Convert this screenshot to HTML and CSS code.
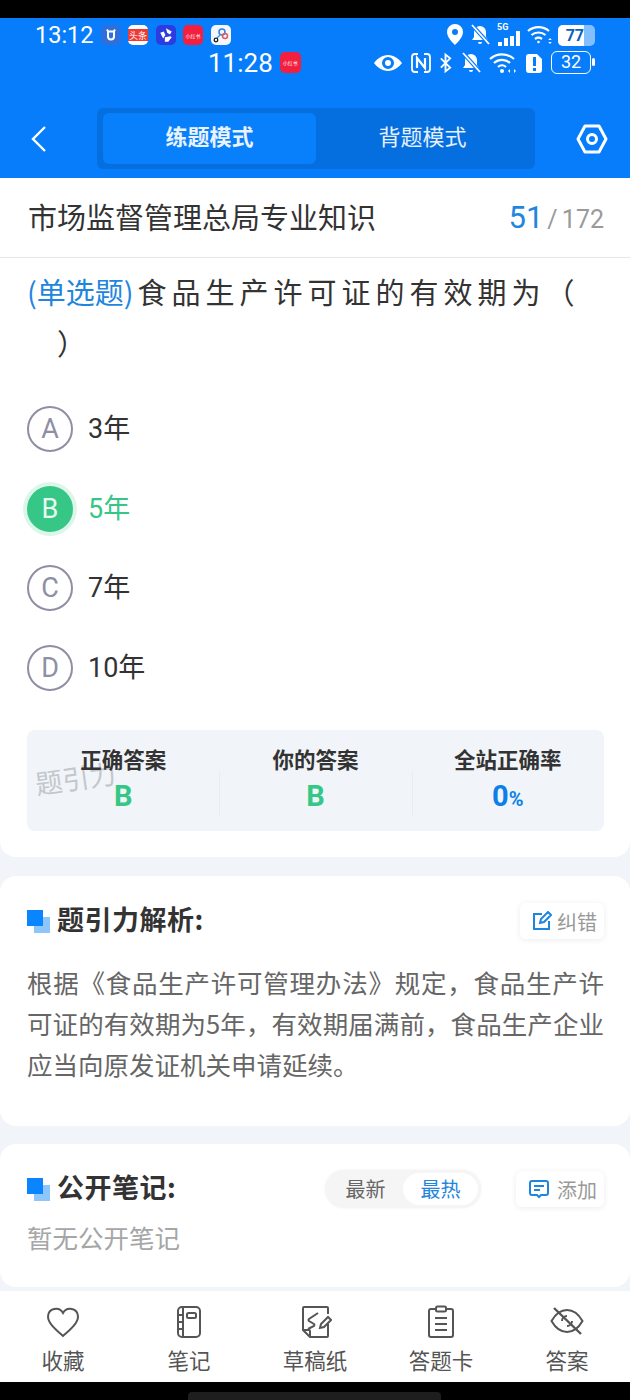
FILE: index.html
```html
<!DOCTYPE html>
<html lang="zh">
<head>
  <meta charset="UTF-8">
  <meta name="viewport" content="width=device-width, initial-scale=1.0">
  <title>题引力</title>
  <link rel="stylesheet" href="styles.css">
</head>
<body>
  <div class="screen">
    <div class="top-black"></div>
    <header class="head">
      <div class="status status-one">
        <span class="clock">13:12</span>
        <div class="apps">
          <span class="app app-u"><svg width="14" height="14" viewBox="0 0 14 14"><path d="M3 1.500l1.200 2M11 1.500l-1.200 2M3 3.500h8M4 3.500v5a3 3 0 0 0 6 0v-5" fill="none" stroke="#fff" stroke-width="2"/></svg></span>
          <span class="app app-news">头条</span>
          <span class="app app-star"><svg width="16" height="16" viewBox="0 0 14 14"><path d="M7 1l5 3-1.500 2.500L8 5zM2 5l3-1 1.500 3-2 3zM6 9l5-1 1 1-3 4H6z" fill="#fff"/></svg></span>
          <span class="app app-red">小红书</span>
          <span class="app app-link"><svg width="18" height="18" viewBox="0 0 18 18" fill="none"><circle cx="10" cy="6" r="3" stroke="#2d7fe0" stroke-width="1.500"/><circle cx="13" cy="10" r="2.500" stroke="#e05a6a" stroke-width="1.500"/><path d="M9 8l-4 4" stroke="#3fa0e0" stroke-width="1.500"/><circle cx="4" cy="14" r="1.800" stroke="#222" stroke-width="1.300"/></svg></span>
        </div>
        <div class="sys">
          <svg width="20" height="24" viewBox="0 0 20 24"><path fill-rule="evenodd" d="M10 1a8 8 0 0 1 8 8c0 5-5 10-8 13-3-3-8-8-8-13a8 8 0 0 1 8-8zm0 5a3 3 0 1 0 0 6 3 3 0 0 0 0-6z" fill="#fff"/></svg>
          <svg width="20" height="22" viewBox="0 0 20 22"><path d="M10 2a6 6 0 0 1 6 6v5l2 3H2l2-3V8a6 6 0 0 1 6-6zM8 18h4a2 2 0 0 1-4 0z" fill="#fff"/><path d="M2 1l17 19" stroke="#077dfc" stroke-width="4"/><path d="M2 1l17 19" stroke="#fff" stroke-width="1.800"/></svg>
          <div class="signal">
            <span class="five-g">5G</span>
            <div class="bars"><i class="bar-a"></i><i class="bar-b"></i><i class="bar-c"></i><i class="bar-d"></i></div>
          </div>
          <svg width="26" height="20" viewBox="0 0 26 20" fill="none" stroke="#fff" stroke-width="2.200"><path d="M1 6a16 16 0 0 1 21 0M4.500 10a11 11 0 0 1 14 0M8 14a6 6 0 0 1 7 0"/><circle cx="11.500" cy="17" r="1.300" fill="#fff" stroke="none"/><path d="M23 13l-1.800 2h3.600zM23 19l-1.800-2h3.600z" fill="#fff" stroke="none"/></svg>
          <div class="batt-full"><span class="batt-fill">77</span></div>
        </div>
      </div>
      <div class="status status-two">
        <span class="clock">11:28</span>
        <span class="app app-red app-big">小红书</span>
        <div class="sys sys-two">
          <svg width="28" height="20" viewBox="0 0 28 20"><path fill-rule="evenodd" d="M14 2c6 0 11 4 14 8-3 4-8 8-14 8S3 14 0 10c3-4 8-8 14-8zm0 2a6 6 0 1 0 0 12 6 6 0 0 0 0-12zm0 3a3 3 0 1 1 0 6 3 3 0 0 1 0-6z" fill="#fff"/></svg>
          <svg width="20" height="22" viewBox="0 0 20 22" fill="none" stroke="#fff" stroke-width="1.800"><path d="M7 2H4a3 3 0 0 0-3 3v12a3 3 0 0 0 3 3h3M13 2h3a3 3 0 0 1 3 3v12a3 3 0 0 1-3 3h-3"/><path d="M6 16V6l8 10V6" stroke-width="2.200"/></svg>
          <svg width="13" height="22" viewBox="0 0 14 22" fill="none" stroke="#fff" stroke-width="2"><path d="M2 6l10 10-5 4V2l5 4L2 16"/></svg>
          <svg width="20" height="22" viewBox="0 0 20 22"><path d="M10 2a6 6 0 0 1 6 6v5l2 3H2l2-3V8a6 6 0 0 1 6-6zM8 18h4a2 2 0 0 1-4 0z" fill="#fff"/><path d="M2 1l17 19" stroke="#077dfc" stroke-width="4"/><path d="M2 1l17 19" stroke="#fff" stroke-width="1.800"/></svg>
          <svg width="28" height="22" viewBox="0 0 28 22" fill="none" stroke="#fff" stroke-width="2.200"><path d="M1 7a18 18 0 0 1 24 0M5 11a12 12 0 0 1 16 0M9 15a6 6 0 0 1 8 0"/><circle cx="13" cy="19" r="2" fill="#fff" stroke="none"/><path d="M19 19l2-2v4zM27 19l-2-2v4z" fill="#fff" stroke="none"/></svg>
          <svg width="17" height="22" viewBox="0 0 17 22"><path fill-rule="evenodd" d="M3 2h8l5 5v11a3 3 0 0 1-3 3H3a3 3 0 0 1-3-3V5a3 3 0 0 1 3-3zm4 3v9h3V5zm0 11v3h3v-3z" fill="#fff"/></svg>
          <div class="batt-line"><span>32</span></div>
        </div>
      </div>
      <nav class="nav">
        <svg class="back" width="18" height="28" viewBox="0 0 18 28" fill="none" stroke="#fff" stroke-width="2.400"><path d="M15 2L3 14l12 12"/></svg>
        <div class="modes">
          <div class="mode mode-on">练题模式</div>
          <div class="mode">背题模式</div>
        </div>
        <svg class="gear" width="32" height="30" viewBox="0 0 32 30" fill="none" stroke="#fff" stroke-width="3"><path d="M9 2h14l7 13-7 13H9L2 15z" stroke-linejoin="round"/><circle cx="16" cy="15" r="4.500"/></svg>
      </nav>
    </header>

    <main class="body">
      <section class="card card-question">
        <div class="bank-row">
          <h1 class="bank-name">市场监督管理总局专业知识</h1>
          <div class="count"><b>51</b><span>/ 172</span></div>
        </div>
        <div class="question"><span class="q-type">(单选题)</span>食品生产许可证的有效期为（<br><span class="q-end">）</span></div>
        <ul class="options">
          <li class="option"><span class="letter">A</span><span class="opt-text">3年</span></li>
          <li class="option option-right"><span class="letter">B</span><span class="opt-text">5年</span></li>
          <li class="option"><span class="letter">C</span><span class="opt-text">7年</span></li>
          <li class="option"><span class="letter">D</span><span class="opt-text">10年</span></li>
        </ul>
        <div class="stats">
          <span class="mark">题引力</span>
          <div class="stat"><h4>正确答案</h4><p class="green">B</p></div>
          <div class="stat"><h4>你的答案</h4><p class="green">B</p></div>
          <div class="stat"><h4>全站正确率</h4><p class="blue">0<small>%</small></p></div>
        </div>
      </section>

      <section class="card card-analysis">
        <div class="title-row">
          <span class="squares"></span>
          <h3>题引力解析:</h3>
          <div class="chip">
            <svg width="20" height="20" viewBox="0 0 20 20" fill="none" stroke="#1f86e0" stroke-width="2"><path d="M10 3H2v15h15v-8M8 12l1-4 7-7 3 3-7 7z"/></svg>
            纠错
          </div>
        </div>
        <p class="analysis">根据《食品生产许可管理办法》规定，食品生产许可证的有效期为5年，有效期届满前，食品生产企业应当向原发证机关申请延续。</p>
      </section>

      <section class="card card-notes">
        <div class="title-row">
          <span class="squares"></span>
          <h3>公开笔记:</h3>
          <div class="sort"><span>最新</span><span class="sort-on">最热</span></div>
          <div class="chip chip-add">
            <svg width="22" height="20" viewBox="0 0 22 20" fill="none" stroke="#1f86e0" stroke-width="2"><path d="M4 2h14a2 2 0 0 1 2 2v10a2 2 0 0 1-2 2h-5l-2 2-2-2H4a2 2 0 0 1-2-2V4a2 2 0 0 1 2-2zM6 7h10M6 11h6"/></svg>
            添加
          </div>
        </div>
        <p class="empty">暂无公开笔记</p>
      </section>
    </main>

    <footer class="tabs">
      <div class="tab">
        <svg width="34" height="34" viewBox="0 0 34 34" fill="none" stroke="#555" stroke-width="2"><path d="M17 31C9 24 2 18 2 11.500A8 8 0 0 1 17 8a8 8 0 0 1 15 3.500C32 18 25 24 17 31z"/></svg>
        收藏
      </div>
      <div class="tab">
        <svg width="34" height="34" viewBox="0 0 34 34" fill="none" stroke="#555" stroke-width="2"><rect x="6" y="2" width="22" height="30" rx="4"/><path d="M11 2v30M6 10h5M6 17h5M6 24h5"/><rect x="15" y="8" width="9" height="5" rx="1.500"/></svg>
        笔记
      </div>
      <div class="tab">
        <svg width="34" height="34" viewBox="0 0 34 34" fill="none" stroke="#555" stroke-width="2"><path d="M30 9V3a1 1 0 0 0-1-1H6a1 1 0 0 0-1 1v22l7 7h17a1 1 0 0 0 1-1V19M5 25h6a1 1 0 0 1 1 1v6"/><path d="M20 8l-9 6q-1 1 0 2l5 3q1 1 0 2l-6 3"/><path d="M22 23l1-4 7-7 3 3-7 7z"/></svg>
        草稿纸
      </div>
      <div class="tab">
        <svg width="34" height="34" viewBox="0 0 34 34" fill="none" stroke="#555" stroke-width="2"><path d="M11 4H7a2 2 0 0 0-2 2v24a2 2 0 0 0 2 2h20a2 2 0 0 0 2-2V6a2 2 0 0 0-2-2h-4"/><rect x="12" y="1.500" width="10" height="5" rx="1.500"/><path d="M11 13h12M11 19h12M11 25h12"/></svg>
        答题卡
      </div>
      <div class="tab">
        <svg width="34" height="34" viewBox="0 0 34 34" fill="none" stroke="#555" stroke-width="2"><path d="M1.500 16c4-7 9-11 15.500-11s11.500 4 15.500 11c-4 7-9 11-15.500 11S5.500 23 1.500 16z"/><path d="M12 16a5 5 0 0 1 5-5M22 16a5 5 0 0 1-5 5"/><path d="M4 3l27 26" stroke-width="2.400"/></svg>
        答案
      </div>
    </footer>
    <div class="home-area"><span class="home-pill"></span></div>
  </div>
</body>
</html>
```

FILE: styles.css
```css
* {
  margin: 0;
  padding: 0;
  box-sizing: border-box;
}
body {
  background-color: #000;
  font-family: "Noto Sans CJK SC", "Roboto", sans-serif;
  color: #333;
}
ul {
  list-style: none;
}
.screen {
  width: 630px;
  height: 1400px;
  display: flex;
  flex-direction: column;
  overflow: hidden;
  background-color: #f1f5f9;
}
.top-black {
  height: 18px;
  background-color: #000;
}

/* blue header */
.head {
  height: 160px;
  background-color: #077dfc;
  color: #fff;
  padding-top: 4px;
}
.status {
  display: flex;
  align-items: center;
  height: 26px;
  padding: 0 34px 0 35px;
}
.status-two {
  height: 31px;
  margin-top: -1px;
  padding-left: 208px;
}
.clock {
  font-family: "Roboto", sans-serif;
  font-size: 23.500px;
  line-height: 26px;
}
.status-two .clock {
  font-size: 26px;
}
.apps {
  display: flex;
  gap: 7.500px;
  margin-left: 7px;
}
.app {
  width: 20px;
  height: 20px;
  border-radius: 5px;
  display: flex;
  align-items: center;
  justify-content: center;
  color: #fff;
  font-size: 6px;
  white-space: nowrap;
  overflow: hidden;
}
.app-u {
  background-color: #2f6fdc;
}
.app-news {
  background: linear-gradient(#fff 20%, #ee3b36 20%, #ee3b36 80%, #fff 80%);
  font-size: 9px;
}
.app-star {
  background-color: #2d3ce0;
}
.app-red {
  background-color: #f2203e;
  font-size: 5px;
}
.app-link {
  background-color: #f4f8fc;
}
.app-big {
  width: 21px;
  height: 21px;
  margin-left: 7px;
}
.sys {
  display: flex;
  align-items: center;
  gap: 5px;
  margin-left: auto;
  padding-right: 1px;
}
.sys-two {
  gap: 8.500px;
}
.signal {
  position: relative;
  width: 25px;
  height: 22px;
  margin-left: 2px;
}
.five-g {
  position: absolute;
  left: 0;
  top: -2px;
  font-family: "Roboto", sans-serif;
  font-size: 9px;
  font-weight: 700;
}
.bars {
  position: absolute;
  left: 1px;
  bottom: 0;
  display: flex;
  align-items: flex-end;
  gap: 2px;
}
.bars i {
  display: block;
  width: 4px;
  background-color: #fff;
}
.bar-a {
  height: 4px;
}
.bar-b {
  height: 8px;
}
.bar-c {
  height: 10px;
}
.bar-d {
  height: 15px;
}
.batt-full {
  width: 37px;
  height: 21px;
  border-radius: 5px;
  background-color: rgba(255, 255, 255, .5);
  overflow: hidden;
}
.batt-fill {
  display: block;
  width: 26px;
  height: 21px;
  background-color: #fff;
  color: #0a5fc0;
  font-family: "Roboto", sans-serif;
  font-size: 16px;
  font-weight: 700;
  line-height: 21px;
  text-align: right;
}
.batt-line {
  width: 40px;
  height: 23px;
  position: relative;
  border: 1.500px solid #fff;
  border-radius: 6px;
  font-family: "Roboto", sans-serif;
  font-size: 18px;
  line-height: 20px;
  text-align: center;
  margin-right: 4px;
}
.batt-line::after {
  content: "";
  position: absolute;
  right: -5px;
  top: 6px;
  width: 3px;
  height: 8px;
  border-radius: 2px;
  background-color: #fff;
}

.nav {
  display: flex;
  align-items: center;
  margin-top: 30px;
  height: 61px;
}
.back {
  margin-left: 30px;
}
.modes {
  width: 438px;
  height: 61px;
  margin-left: 49px;
  padding: 5px 6px;
  display: flex;
  border-radius: 6px;
  background-color: #066fdf;
}
.mode {
  flex: 1;
  border-radius: 6px;
  font-size: 22px;
  line-height: 44px;
  text-align: center;
  color: #e4f0fd;
}
.mode-on {
  background-color: #087ffb;
  color: #e9f3fe;
  font-weight: 700;
}
.gear {
  margin-left: 41px;
}

/* cards */
.body {
  flex: 1;
  display: flex;
  flex-direction: column;
}
.card {
  background-color: #fff;
  border-radius: 16px;
  padding: 0 26px 0 27px;
}
.card-question {
  height: 679px;
  border-radius: 0 0 16px 16px;
  margin-bottom: 19px;
}
.bank-row {
  display: flex;
  justify-content: space-between;
  align-items: center;
  height: 80px;
  margin: 0 -26px 0 -27px;
  padding: 0 26px 0 28px;
  border-bottom: 1px solid #e4e6e9;
}
.bank-name {
  font-size: 29px;
  font-weight: 400;
  color: #333;
  padding-bottom: 4px;
}
.count {
  font-family: "Roboto", sans-serif;
  font-size: 25px;
  color: #9a9a9a;
  display: flex;
  align-items: baseline;
  gap: 4px;
  word-spacing: -2px;
}
.count b {
  font-size: 31px;
  font-weight: 400;
  color: #1f86e0;
}
.question {
  padding-top: 8px;
  font-size: 29px;
  line-height: 51px;
  letter-spacing: 5px;
  color: #333;
}
.q-type {
  color: #1f86e0;
  letter-spacing: 0;
  margin-right: 4px;
}
.q-end {
  padding-left: 30px;
}
.options {
  margin-top: 38px;
}
.option {
  display: flex;
  align-items: center;
  gap: 15px;
  height: 46px;
  margin-bottom: 33.500px;
  font-family: "Roboto", "Noto Sans CJK SC", sans-serif;
  font-size: 27px;
  color: #333;
}
.opt-text {
  margin-bottom: 5px;
}
.letter {
  width: 46px;
  height: 46px;
  border: 2px solid #8e8fa3;
  border-radius: 50%;
  display: flex;
  align-items: center;
  justify-content: center;
  font-size: 27px;
  font-weight: 400;
  color: #8e8fa3;
}
.option-right {
  color: #36c786;
}
.option-right .letter {
  background-color: #36c786;
  border-color: #36c786;
  box-shadow: 0 0 0 4px #dcf6ea;
  color: #e8fbf2;
}
.stats {
  position: relative;
  display: flex;
  height: 101px;
  margin-top: 39px;
  padding-top: 13px;
  border-radius: 8px;
  background-color: #f1f5f9;
}
.stat {
  flex: 1;
  position: relative;
  text-align: center;
  height: 76px;
}
.stat + .stat::before {
  content: "";
  position: absolute;
  left: 0;
  top: 28px;
  width: 1px;
  height: 44px;
  background-color: #e8ecf1;
}
.stat h4 {
  font-size: 21.500px;
  line-height: 32px;
  font-weight: 700;
  color: #333;
}
.stat p {
  font-family: "Roboto", sans-serif;
  font-size: 29px;
  line-height: 42px;
  font-weight: 700;
}
.stat small {
  font-size: 20px;
}
.green {
  color: #36c786;
}
.blue {
  color: #0d7fe8;
}
.mark {
  position: absolute;
  left: 8px;
  top: 31px;
  font-size: 27px;
  line-height: 34px;
  color: #bfc3c8;
  transform: rotate(-8deg);
  opacity: .9;
}

.card-analysis {
  height: 250px;
  padding-top: 27px;
  margin-bottom: 18px;
}
.card-notes {
  height: 143px;
  padding-top: 27px;
  border-radius: 16px;
}
.title-row {
  display: flex;
  align-items: center;
  height: 36px;
}
.title-row h3 {
  font-size: 27px;
  font-weight: 700;
  letter-spacing: .5px;
  color: #333;
  margin-left: 7px;
  padding-bottom: 5px;
}
.squares {
  position: relative;
  display: block;
  width: 23px;
  height: 23px;
  background: linear-gradient(#0a84ff, #0a84ff) 0 0 / 16px 16px no-repeat,
    linear-gradient(#8cc6fb, #8cc6fb) 7px 7px / 16px 16px no-repeat;
}
.chip {
  display: flex;
  align-items: center;
  gap: 5px;
  height: 36px;
  margin-left: auto;
  padding: 0 7px 0 12px;
  border-radius: 6px;
  background-color: #fff;
  box-shadow: 0 1px 6px rgba(0, 0, 0, .08);
  font-size: 20px;
  color: #999;
}
.chip-add {
  gap: 7px;
}
.analysis {
  margin-top: 22px;
  font-size: 25.500px;
  line-height: 41px;
  color: #666;
  text-align: justify;
}
.sort {
  display: flex;
  align-items: center;
  height: 38px;
  margin-left: auto;
  padding: 3px;
  border-radius: 19px;
  background-color: #f5f5f5;
  box-shadow: 0 0 3px rgba(0, 0, 0, .06);
  font-size: 20px;
  color: #666;
}
.sort span {
  width: 75px;
  text-align: center;
  line-height: 32px;
  border-radius: 16px;
}
.sort .sort-on {
  background-color: #fff;
  color: #1f86e0;
}
.sort + .chip {
  margin-left: 35px;
}
.empty {
  margin-top: 12px;
  font-size: 25.500px;
  line-height: 36px;
  color: #a6a6a6;
}

/* bottom tabs */
.tabs {
  display: flex;
  height: 91px;
  background-color: #fff;
}
.tab {
  flex: 1;
  display: flex;
  flex-direction: column;
  align-items: center;
  gap: 6px;
  padding-top: 14px;
  font-size: 21.500px;
  line-height: 30px;
  color: #555;
}
.home-area {
  height: 18px;
  background-color: #000;
  position: relative;
}
.home-pill {
  position: absolute;
  left: 188px;
  top: 10px;
  width: 253px;
  height: 8px;
  border-radius: 4px 4px 0 0;
  background-color: #1e1e1e;
}
```
